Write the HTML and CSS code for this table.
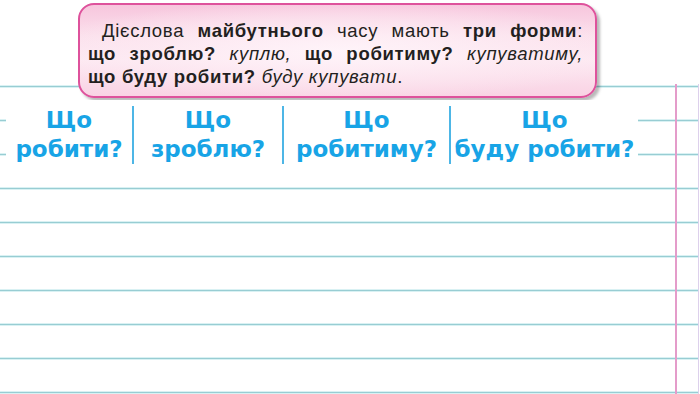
FILE: index.html
```html
<!DOCTYPE html>
<html lang="uk">
<head>
<meta charset="utf-8">
<link rel="stylesheet" href="styles.css">
</head>
<body>
<div class="sheet">
  <div class="rule-box">
    <span class="ln ln-first">Дієслова <b>майбутнього</b> часу мають <b>три форми</b>:</span>
    <span class="ln"><b>що зроблю?</b> <i>куплю,</i> <b>що робитиму?</b> <i>купуватиму,</i></span>
    <span class="ln ln-last"><b>що буду робити?</b> <i>буду купувати</i>.</span>
  </div>
  <div class="header">
    <div class="cell">Що<br>робити?</div>
    <div class="cell sep">Що<br>зроблю?</div>
    <div class="cell sep">Що<br>робитиму?</div>
    <div class="cell sep">Що<br>буду робити?</div>
  </div>
</div>
</body>
</html>
```

FILE: styles.css
```css
html, body {
  margin: 0;
  padding: 0;
  background: #ffffff;
}

.sheet {
  width: 700px;
  height: 394px;
  overflow: hidden;
  display: flex;
  flex-direction: column;
  background:
    linear-gradient(#e49cca, #e49cca) 675px 84px / 2px 310px no-repeat,
    linear-gradient(#ddd0ec, #ddd0ec) 698px 84px / 1px 310px no-repeat,
    repeating-linear-gradient(to bottom,
      #d9f1f3 0, #d9f1f3 1px,
      #98cdd3 1px, #98cdd3 2px,
      #d9f1f3 2px, #d9f1f3 3px,
      transparent 3px, transparent 34px) 0 85px / 698px 312px no-repeat,
    #ffffff;
}

.rule-box {
  margin: 3px 0 0 78px;
  width: 495px;
  padding: 14px 12px 8px 8px;
  border: 2px solid #de529c;
  border-radius: 16px;
  background:
    radial-gradient(ellipse 60% 55% at 50% 50%, rgba(255, 245, 250, 0.9) 0%, rgba(253, 235, 243, 0.6) 60%, rgba(253, 235, 243, 0) 100%),
    linear-gradient(to bottom, #f7c6dd 0%, #fbe0ec 35%, #fde9f2 60%, #f9d3e4 100%);
  box-shadow: 3px 3px 3px rgba(0, 0, 0, 0.28);
  font-family: "Liberation Sans", Arial, sans-serif;
  font-size: 18.5px;
  line-height: 23px;
  letter-spacing: 0.7px;
  color: #231f20;
}

.ln {
  display: block;
  text-align: justify;
  text-align-last: justify;
}

.ln-first {
  text-indent: 14px;
}

.ln-last {
  text-align-last: left;
}

.rule-box b {
  font-weight: bold;
}

.rule-box i {
  font-style: italic;
}

.header {
  margin: 2px 0 0 6px;
  width: 632px;
  height: 86px;
  box-sizing: border-box;
  padding-top: 6px;
  background: #ffffff;
  display: grid;
  grid-template-columns: 126px 150px 167px 189px;
  align-items: start;
}

.cell {
  height: 58px;
  text-align: center;
  font-family: "DejaVu Sans", sans-serif;
  font-weight: bold;
  font-size: 23px;
  line-height: 29px;
  color: #18a4e6;
  white-space: nowrap;
}

.sep {
  border-left: 2px solid #4db6e6;
}
```
